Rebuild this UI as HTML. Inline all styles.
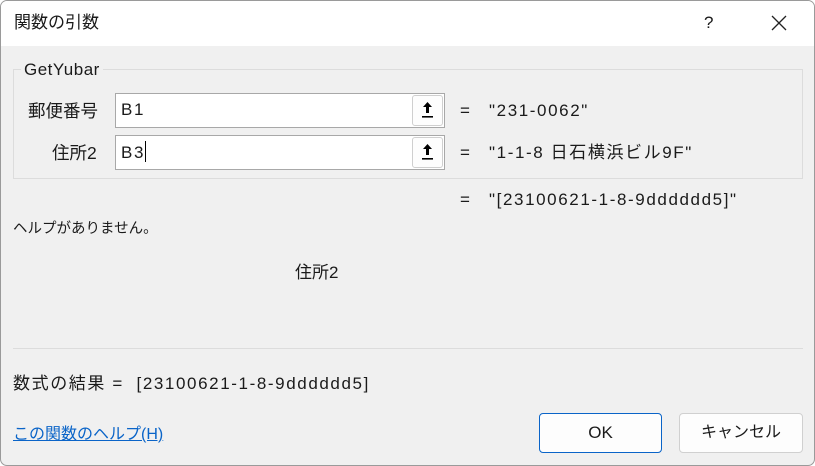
<!DOCTYPE html>
<html><head><meta charset="utf-8"><style>
*{margin:0;padding:0;box-sizing:border-box}
body{width:815px;height:466px;overflow:hidden;font-family:"Liberation Sans","Noto Sans CJK JP",sans-serif;font-size:16px;color:#1a1a1a;background:#fff}
.win{position:absolute;left:0;top:0;width:815px;height:466px;border:1px solid #9a9a9a;border-radius:7px;background:#f0f0f0;overflow:hidden}
.title{position:absolute;left:0;top:0;width:815px;height:45px;background:#fff}
.a{position:absolute;white-space:nowrap;line-height:22px}
.v{font-size:17px;letter-spacing:1.6px}
.grp{position:absolute;left:12px;top:68px;width:790px;height:110px;border:1px solid #dcdcdc}
.inp{position:absolute;left:114px;width:330px;height:35px;background:#fff;border:1px solid #a8a8a8}
.btn{position:absolute;right:1px;top:1px;width:31px;height:31px;border:1px solid #cfcfcf;border-radius:3px;background:#fdfdfd}
.pb{position:absolute;top:412px;height:40px;border:1px solid #d0d0d0;border-radius:4px;background:#fdfdfd;text-align:center;line-height:38px;font-size:17px}
</style></head><body><div class="win">
<div class="title"></div>
<div class="a" style="left:13px;top:11px;font-size:17px">関数の引数</div>
<div class="a" style="left:703px;top:11px;font-size:17px">?</div>
<svg class="a" style="left:770px;top:14px" width="16" height="16"><path d="M1 1L15 15M15 1L1 15" stroke="#222" stroke-width="1.3"/></svg>
<div class="grp"></div>
<div class="a" style="left:20px;top:58px;background:#f0f0f0;padding:0 3px;font-size:17px;letter-spacing:0.5px">GetYubar</div>
<div class="a" style="left:27px;top:99px;font-size:17.5px">郵便番号</div>
<div class="a" style="left:51px;top:141px;font-size:17.5px">住所2</div>
<div class="inp" style="top:92px"><span class="a v" style="left:5px;top:5px">B1</span><div class="btn"><svg width="29" height="29"><path d="M14.5 6L10 11H13V17H16V11H19Z" fill="#000"/><rect x="9" y="20" width="11" height="1.6" fill="#000"/></svg></div></div>
<div class="inp" style="top:134px"><span class="a v" style="left:5px;top:5px">B3<span style="display:inline-block;width:1px;height:21px;background:#000;vertical-align:-4px"></span></span><div class="btn"><svg width="29" height="29"><path d="M14.5 6L10 11H13V17H16V11H19Z" fill="#000"/><rect x="9" y="20" width="11" height="1.6" fill="#000"/></svg></div></div>
<div class="a v" style="left:459px;top:99px">=</div><div class="a v" style="left:488px;top:99px">"231-0062"</div>
<div class="a v" style="left:459px;top:141px">=</div><div class="a v" style="left:488px;top:141px">"1-1-8 日石横浜ビル9F"</div>
<div class="a v" style="left:459px;top:188px">=</div><div class="a v" style="left:488px;top:188px">"[23100621-1-8-9dddddd5]"</div>
<div class="a" style="left:12px;top:217px;font-size:14.5px">ヘルプがありません。</div>
<div class="a" style="left:294px;top:261px;font-size:17px">住所2</div>
<div class="a" style="left:12px;top:347px;width:790px;height:1px;background:#dcdcdc"></div>
<div class="a v" style="left:12px;top:372px;letter-spacing:1.6px">数式の結果 =&nbsp; [23100621-1-8-9dddddd5]</div>
<div class="a" style="left:12px;top:423px;color:#0a64c8;text-decoration:underline;font-size:16px">この関数のヘルプ(H)</div>
<div class="pb" style="left:538px;width:123px;border:1px solid #0a64c8">OK</div>
<div class="pb" style="left:678px;width:124px;font-size:16px">キャンセル</div>
</div></body></html>
